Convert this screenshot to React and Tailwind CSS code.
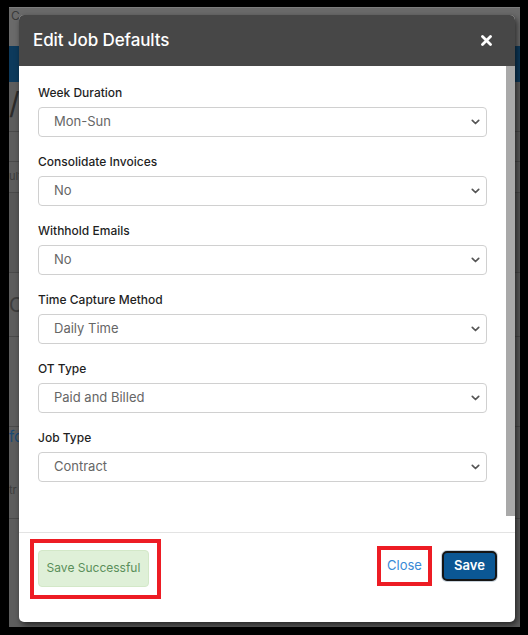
import React from "react";

const fields = [
  { label: "Week Duration", value: "Mon-Sun" },
  { label: "Consolidate Invoices", value: "No" },
  { label: "Withhold Emails", value: "No" },
  { label: "Time Capture Method", value: "Daily Time" },
  { label: "OT Type", value: "Paid and Billed" },
  { label: "Job Type", value: "Contract" },
];

function Chevron() {
  return (
    <svg width="9" height="6" viewBox="0 0 9 6" className="text-[#555]">
      <path
        d="M1.3 1.3 L4.5 4.5 L7.7 1.3"
        fill="none"
        stroke="currentColor"
        strokeWidth="1.7"
        strokeLinecap="round"
        strokeLinejoin="round"
      />
    </svg>
  );
}

function SelectField({ label, value }) {
  return (
    <div className="mb-[16px]">
      <label className="block h-[18px] leading-[18px] text-[12px] font-medium text-[#1f1f1f]">
        {label}
      </label>
      <div className="mt-[5px] h-[30px] flex items-center justify-between rounded-[4px] border border-[#d0d0d0] pl-[15px] pr-[6px] text-[13px] text-[#666]">
        <span>{value}</span>
        <Chevron />
      </div>
    </div>
  );
}

function Backdrop() {
  return (
    <div className="h-full flex flex-col">
      <div className="h-[39px] bg-[#6a6a6a] border-t border-[#7c7c7c] pl-[2px] text-[12px] text-[#3a3a3a] leading-[16px]">
        C
      </div>
      <div className="h-[36px] bg-[#0d3a5c]" />
      <div className="flex-1 bg-[#5d5d5d] flex flex-col text-[#333]">
        <div className="h-[49px] pt-[4px] text-[30px] leading-[34px] text-[#2a2a2a]">/</div>
        <div className="h-[30px] border-t border-[#4a4a4a]" />
        <div className="h-[31px] border-t border-[#4a4a4a] text-[11px] leading-[28px] text-[#3a3a3a]">ult</div>
        <div className="h-[80px] border-t border-[#4a4a4a] bg-[#585858]" />
        <div className="h-[64px] border-t border-[#4a4a4a] pt-[20px] text-[20px] leading-[24px] text-[#3c3c3c]">C</div>
        <div className="h-[90px] border-t border-[#4a4a4a]" />
        <div className="h-[56px] border-t border-[#4a4a4a] text-[15px] leading-[20px] text-[#1a4a73]">fo</div>
        <div className="h-[36px] text-[11px] leading-[16px] text-[#3c3c3c]">tr</div>
        <div className="flex-1 border-t border-[#4a4a4a]" />
      </div>
    </div>
  );
}

export default function App() {
  return (
    <div
      className="w-[528px] h-[635px] bg-black pl-[9px] pr-[8px] pt-[7px] pb-[8px]"
      style={{ fontFamily: "Inter, 'Noto Sans', sans-serif" }}
    >
      <div className="relative w-full h-full overflow-hidden">
        <Backdrop />
        <div className="absolute left-[10px] top-[8px] w-[496px] h-[607px] flex flex-col rounded-[5px] bg-white overflow-hidden shadow-[2px_3px_6px_rgba(0,0,0,0.6)]">
          <div className="h-[51px] shrink-0 bg-[#474747] flex items-center justify-between pl-[14px] pr-[23px]">
            <h2 className="text-[17px] font-medium text-white tracking-[-0.1px]">
              Edit Job Defaults
            </h2>
            <svg width="11" height="11" viewBox="0 0 11 11">
              <path
                d="M1.5 1.5 L9.5 9.5 M9.5 1.5 L1.5 9.5"
                stroke="white"
                strokeWidth="2.8"
                strokeLinecap="round"
              />
            </svg>
          </div>

          <div className="h-[466px] shrink-0 flex">
            <div className="flex-1 pl-[19px] pr-[19px] pt-[18px]">
              {fields.map((f) => (
                <SelectField key={f.label} label={f.label} value={f.value} />
              ))}
            </div>
            <div className="w-[9px] bg-white">
              <div className="h-[450px] bg-[#a9a9a9]" />
            </div>
          </div>

          <div className="flex-1 border-t border-[#e3e3e3] flex items-center justify-between pl-[11px] pr-[18px] pb-[18px]">
            <div className="border-4 border-[#ed1c24] pl-[4px] pr-[8px] pt-[7px] pb-[8px]">
              <div className="w-[111px] h-[37px] flex items-center justify-center rounded-[4px] border border-[#d3e8c8] bg-[#dff0d8] text-[12px] text-[#5a8f5a]">
                Save Successful
              </div>
            </div>
            <div className="flex items-center gap-[10px] mb-[6px]">
              <div className="w-[55px] h-[40px] border-4 border-[#ed1c24] flex items-center justify-center text-[13px] text-[#3a8ad6]">
                Close
              </div>
              <button className="w-[55px] h-[30px] rounded-[5px] border-2 border-[#151515] bg-[#0b5794] text-[13px] font-semibold text-white shadow-[0_0_0_1px_#c9d3dc]">
                Save
              </button>
            </div>
          </div>
        </div>
      </div>
    </div>
  );
}
